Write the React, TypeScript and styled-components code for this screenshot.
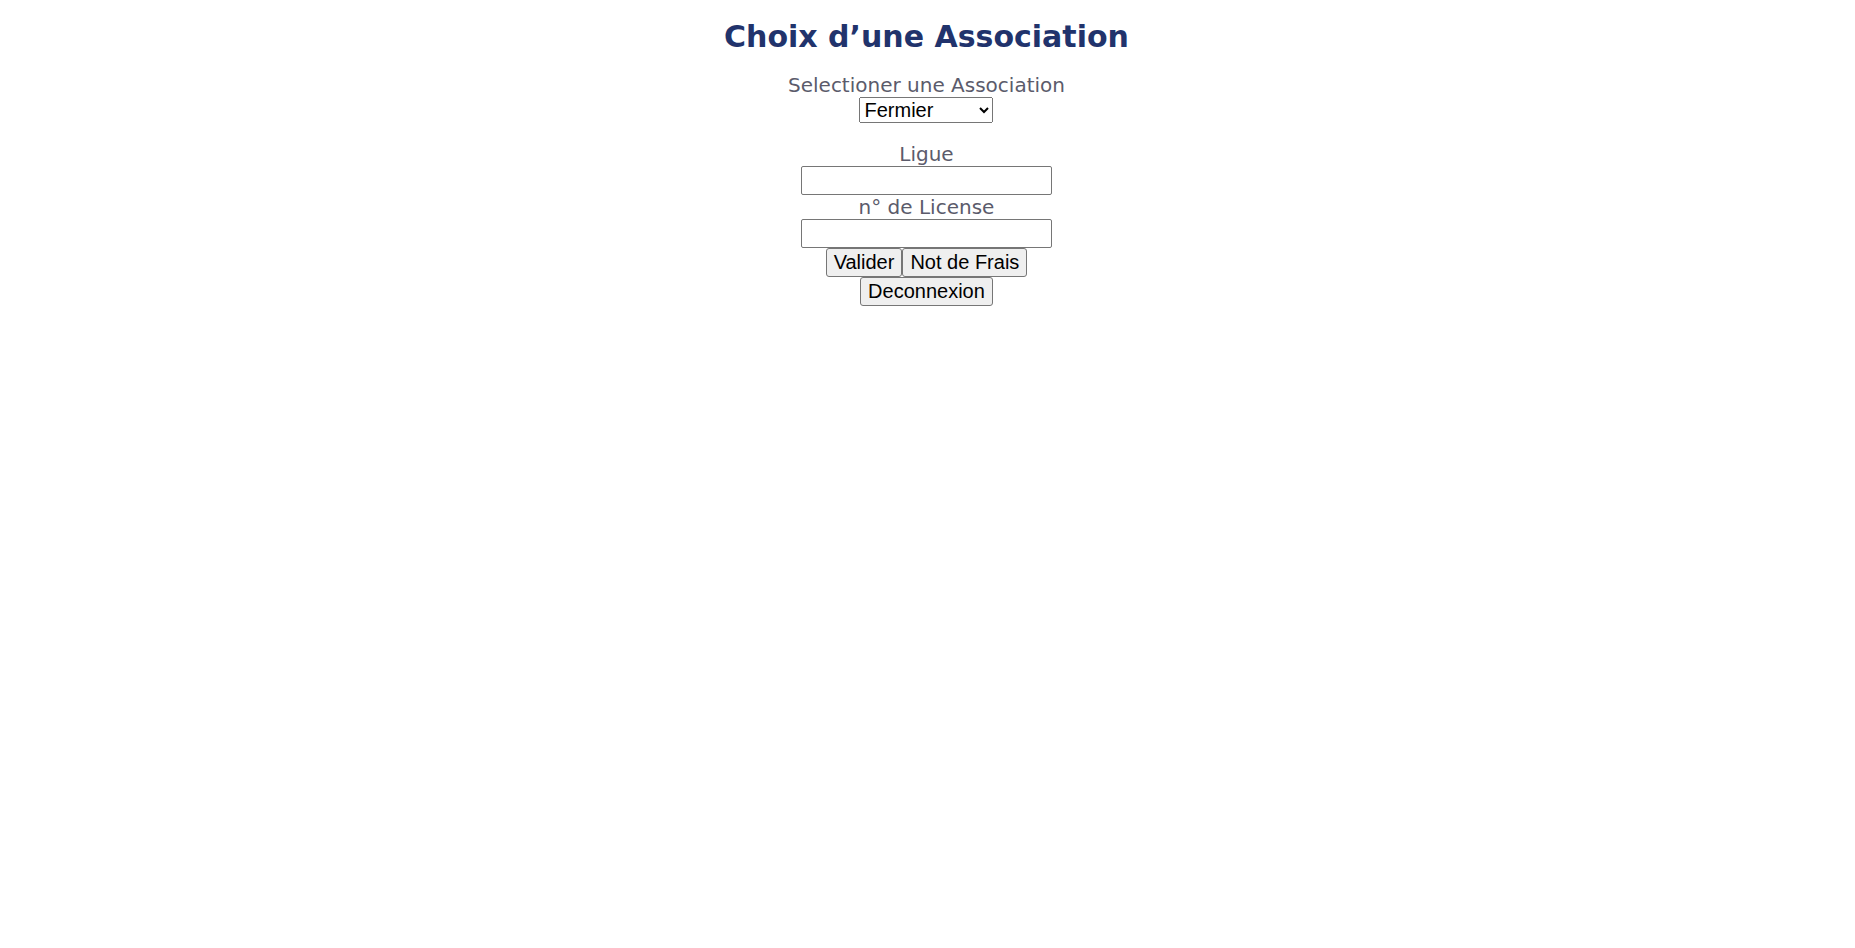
import React from "react";
import styled, { createGlobalStyle } from "styled-components";

const GlobalStyle = createGlobalStyle`
  body {
    margin: 0;
    background: #fff;
    color: #5b5b6b;
    font-family: "DejaVu Sans", Verdana, sans-serif;
    font-size: 20px;
    line-height: 24px;
  }
`;

const Page = styled.main`
  display: flex;
  flex-direction: column;
  align-items: center;
  padding: 19px 2px 19px 0;
`;

const Title = styled.h1`
  margin: 0 0 18px;
  color: #21336c;
  font-size: 30px;
  line-height: 36px;
`;

const Form = styled.form`
  display: flex;
  flex-direction: column;
  align-items: center;
`;

const Field = styled.div<{ $gap?: boolean }>`
  display: flex;
  flex-direction: column;
  align-items: center;
  margin-bottom: ${(p) => (p.$gap ? "19px" : "0")};
`;

const Select = styled.select`
  width: 134px;
  height: 26px;
  font-family: "Liberation Sans", Arial, sans-serif;
  font-size: 20px;
`;

const TextInput = styled.input`
  box-sizing: border-box;
  width: 251px;
  height: 29px;
  border: 1px solid #767676;
  border-radius: 2px;
  font-family: "Liberation Sans", Arial, sans-serif;
  font-size: 20px;
`;

const Actions = styled.div`
  display: flex;
`;

const Button = styled.button`
  height: 29px;
  padding: 1px 7px;
  border: 1px solid #767676;
  border-radius: 3px;
  background: #efefef;
  color: #000;
  font-family: "Liberation Sans", Arial, sans-serif;
  font-size: 20px;
`;

export default function App() {
  return (
    <>
      <GlobalStyle />
      <Page>
        <Title>Choix d’une Association</Title>
        <Form onSubmit={(e) => e.preventDefault()}>
          <Field $gap>
            <label htmlFor="association">Selectioner une Association</label>
            <Select id="association" defaultValue="Fermier">
              <option>Fermier</option>
            </Select>
          </Field>
          <Field>
            <label htmlFor="ligue">Ligue</label>
            <TextInput id="ligue" type="text" />
          </Field>
          <Field>
            <label htmlFor="license">n° de License</label>
            <TextInput id="license" type="text" />
          </Field>
          <Actions>
            <Button type="submit">Valider</Button>
            <Button type="button">Not de Frais</Button>
          </Actions>
          <Button type="button">Deconnexion</Button>
        </Form>
      </Page>
    </>
  );
}
